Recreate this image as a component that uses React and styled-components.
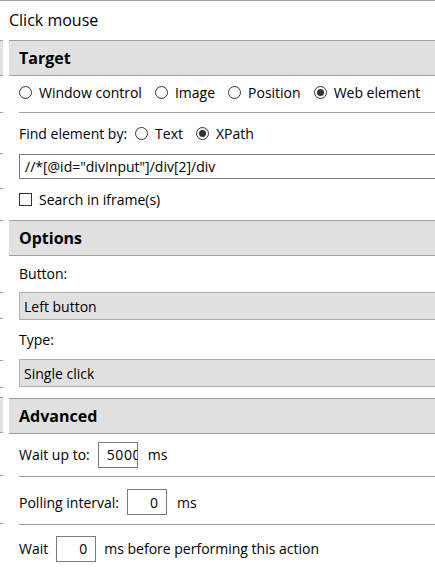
import React from 'react';
import styled, { createGlobalStyle } from 'styled-components';

const GlobalStyle = createGlobalStyle`
  html, body {
    margin: 0;
    padding: 0;
    background: #fff;
  }
  body {
    font-family: "Open Sans", "Noto Sans", sans-serif;
    font-size: 14px;
    color: #000;
  }
`;

const Frame = styled.div`
  display: flex;
  height: 572px;
  overflow: hidden;
  border-top: 1px solid #a0a0a0;
  box-sizing: border-box;
`;

// sliver of the neighbouring panel peeking in at the left edge
const EdgeStrip = styled.div`
  width: 3px;
  flex-shrink: 0;
  display: flex;
  flex-direction: column;
`;

const EdgeSeg = styled.div`
  height: ${p => p.h}px;
  flex-shrink: 0;
  background: ${p => (p.shaded ? '#e1e1e1' : '#fff')};
  border-bottom: 1px solid #a0a0a0;
`;

const Panel = styled.div`
  flex: 1;
  min-width: 0;
  margin-left: 6px;
  display: flex;
  flex-direction: column;
`;

const Title = styled.div`
  height: 39px;
  display: flex;
  align-items: center;
  font-size: 16px;
  padding-bottom: 2px;
  box-sizing: border-box;
`;

const SectionHeader = styled.div`
  height: 34px;
  flex-shrink: 0;
  margin-top: ${p => p.gap || 0}px;
  display: flex;
  align-items: center;
  padding-left: 10px;
  background: #e1e1e1;
  border-top: 1px solid #a0a0a0;
  border-bottom: 1px solid #a0a0a0;
  font-weight: 700;
  font-size: 16px;
`;

const Body = styled.div`
  padding-left: 10px;
  display: flex;
  flex-direction: column;
`;

const Row = styled.div`
  height: ${p => p.h}px;
  flex-shrink: 0;
  box-sizing: border-box;
  display: flex;
  align-items: center;
  padding-top: ${p => p.drop || 0}px;
  padding-bottom: ${p => p.lift || 0}px;
  border-bottom: ${p => (p.divider ? '1px solid #a0a0a0' : 'none')};
  white-space: nowrap;
`;

const Label = styled.span`
  margin-right: ${p => p.space || 0}px;
`;

const Choice = styled.label`
  display: inline-flex;
  align-items: center;
  gap: 7px;
  margin-right: ${p => p.space || 0}px;
`;

const RadioMark = styled.span`
  width: 13px;
  height: 13px;
  flex-shrink: 0;
  box-sizing: border-box;
  border: 1px solid #333;
  border-radius: 50%;
  display: inline-flex;
  align-items: center;
  justify-content: center;
  &::after {
    content: '';
    width: 7px;
    height: 7px;
    border-radius: 50%;
    background: ${p => (p.checked ? '#333' : 'transparent')};
  }
`;

const CheckMark = styled.span`
  width: 13px;
  height: 13px;
  flex-shrink: 0;
  box-sizing: border-box;
  border: 1px solid #333;
  margin-right: 7px;
`;

const TextField = styled.div`
  height: 25px;
  flex-shrink: 0;
  box-sizing: border-box;
  border: 1px solid #7a7a7a;
  border-right: none;
  display: flex;
  align-items: center;
  padding-left: 5px;
  white-space: nowrap;
`;

const Dropdown = styled.div`
  height: ${p => p.h}px;
  flex-shrink: 0;
  box-sizing: border-box;
  background: #e1e1e1;
  border: 1px solid #adadad;
  border-right: none;
  display: flex;
  align-items: center;
  padding-left: 4px;
`;

const NumBox = styled.div`
  width: 40px;
  height: 26px;
  flex-shrink: 0;
  box-sizing: border-box;
  border: 1px solid #7a7a7a;
  display: flex;
  align-items: center;
  justify-content: ${p => (p.clip ? 'flex-start' : 'flex-end')};
  padding: ${p => (p.clip ? '0 0 0 8px' : '0 8px 0 0')};
  letter-spacing: ${p => (p.clip ? '0.6px' : '0')};
  overflow: hidden;
  white-space: nowrap;
  margin: 0 ${p => p.after}px 0 ${p => p.before}px;
`;

function Radio({ label, checked, space }) {
  return (
    <Choice space={space}>
      <RadioMark checked={checked} />
      {label}
    </Choice>
  );
}

const edge = [
  { h: 39 }, { h: 34, shaded: true }, { h: 36 }, { h: 40 }, { h: 34 },
  { h: 31 }, { h: 71 }, { h: 25 }, { h: 41 }, { h: 26 }, { h: 9 },
  { h: 34, shaded: true }, { h: 42 }, { h: 47 },
];

export default function App() {
  return (
    <>
      <GlobalStyle />
      <Frame>
        <EdgeStrip>
          {edge.map((s, i) => (
            <EdgeSeg key={i} h={s.h} shaded={s.shaded} />
          ))}
        </EdgeStrip>
        <Panel>
          <Title>Click mouse</Title>

          <SectionHeader>Target</SectionHeader>
          <Body>
            <Row h={37} lift={3} divider>
              <Radio label="Window control" space={13} />
              <Radio label="Image" space={13} />
              <Radio label="Position" space={13} />
              <Radio label="Web element" checked />
            </Row>
            <Row h={41}>
              <Label space={8}>Find element by:</Label>
              <Radio label="Text" space={13} />
              <Radio label="XPath" checked />
            </Row>
            <TextField>//*[@id="divInput"]/div[2]/div</TextField>
            <Row h={41}>
              <CheckMark />
              Search in iframe(s)
            </Row>
          </Body>

          <SectionHeader>Options</SectionHeader>
          <Body>
            <Row h={36} lift={2}>Button:</Row>
            <Dropdown h={28}>Left button</Dropdown>
            <Row h={39}>Type:</Row>
            <Dropdown h={28}>Single click</Dropdown>
          </Body>

          <SectionHeader gap={11}>Advanced</SectionHeader>
          <Body>
            <Row h={43} lift={1} divider>
              Wait up to:
              <NumBox clip before={8} after={10}>5000</NumBox>
              ms
            </Row>
            <Row h={48} drop={3} divider>
              Polling interval:
              <NumBox before={8} after={10}>0</NumBox>
              ms
            </Row>
            <Row h={47}>
              Wait
              <NumBox before={8} after={8}>0</NumBox>
              ms before performing this action
            </Row>
          </Body>
        </Panel>
      </Frame>
    </>
  );
}
